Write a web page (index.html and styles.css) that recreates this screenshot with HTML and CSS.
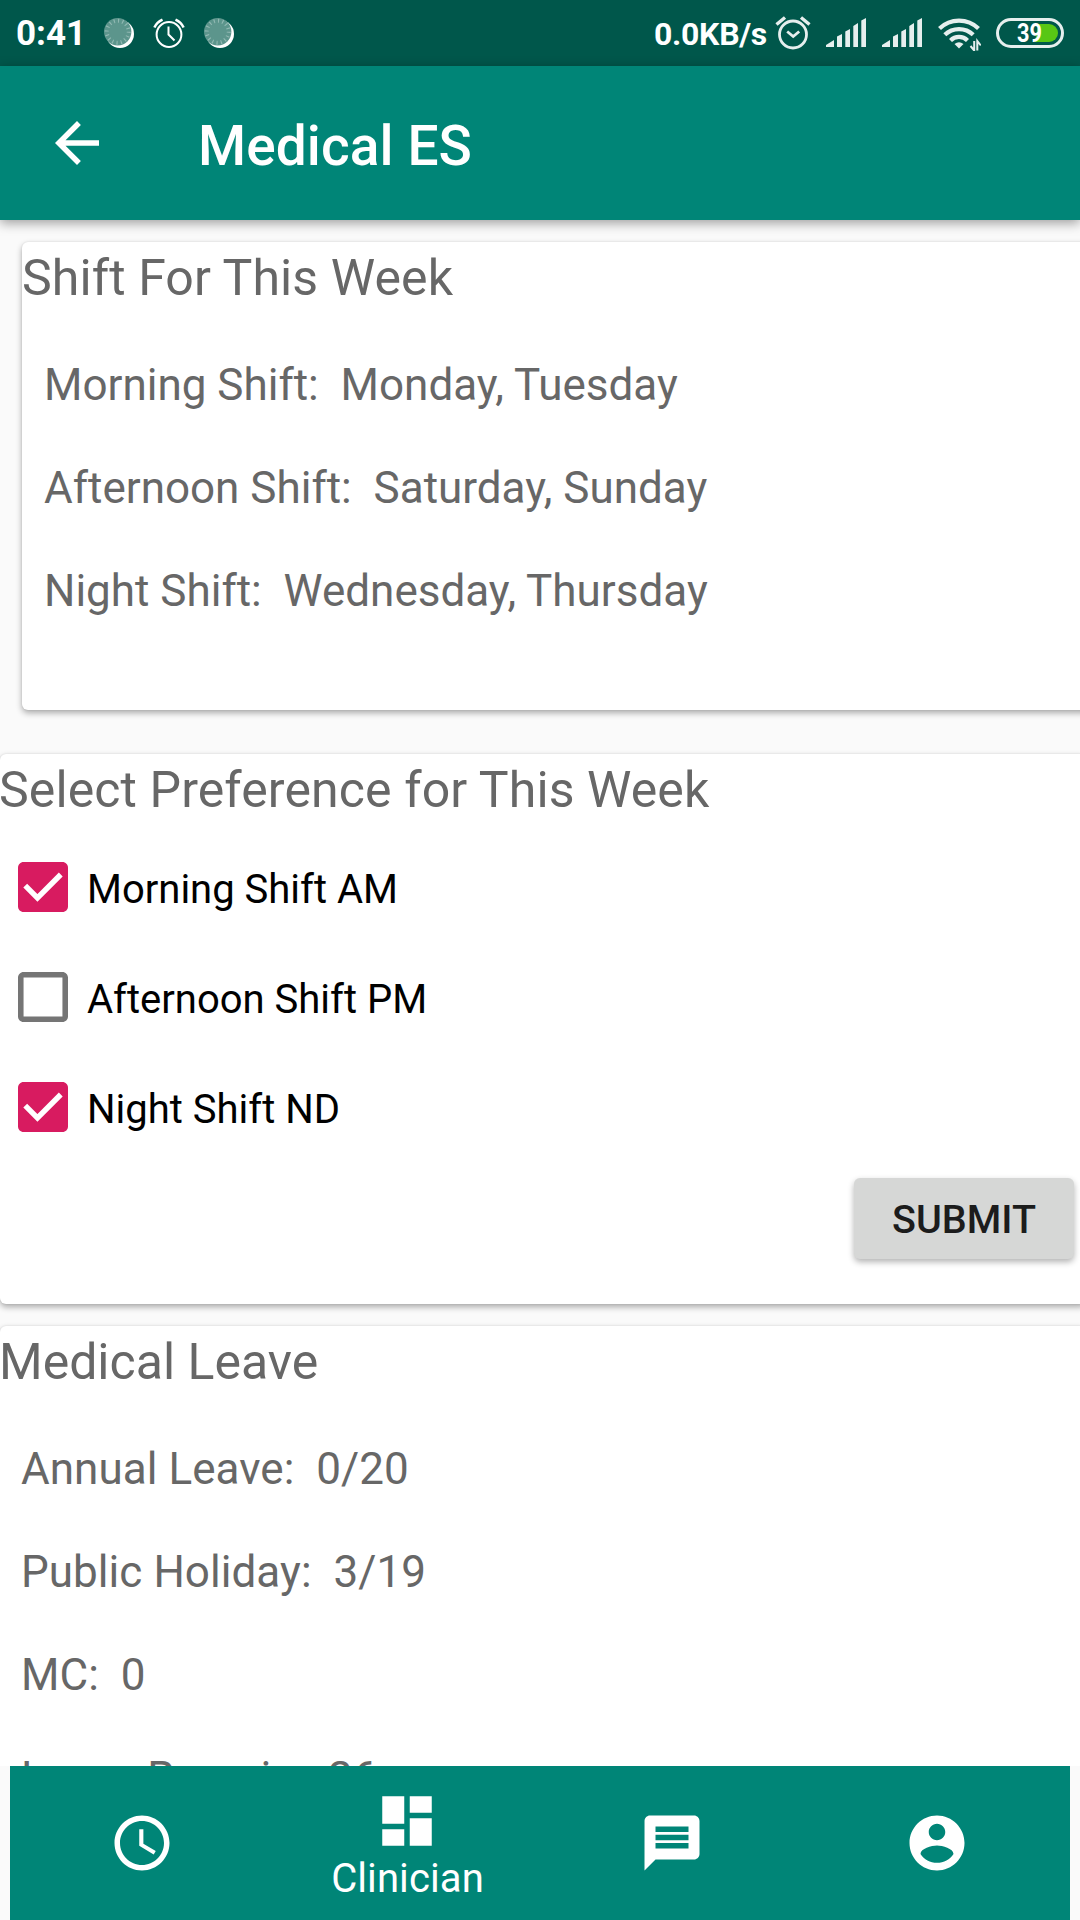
FILE: index.html
```html
<!DOCTYPE html>
<html lang="en">
<head>
<meta charset="utf-8">
<title>Medical ES</title>
<link rel="stylesheet" href="styles.css">
</head>
<body>
<div class="screen">
  <header class="status-bar">
    <span class="status-time">0:41</span>
    <svg class="status-disc" viewBox="0 0 30 30"><circle cx="16" cy="16" r="14" fill="#fff"/><circle cx="13.7" cy="13.7" r="13.7" fill="#5c958c"/><circle cx="13.7" cy="13.7" r="11" fill="none" stroke="#92b9b3" stroke-width="4" stroke-dasharray="1.1 3.22"/></svg>
    <svg class="status-alarm" viewBox="0 0 32 30" fill="none" stroke="#fff" stroke-width="2"><circle cx="16" cy="16.5" r="12.4"/><path d="M15.500 8.500v8l6 6"/><path d="M1.400 9.500Q3.700 4.300 9.500 1.600M30.600 9.500Q28.300 4.300 22.500 1.600" stroke-width="2.500"/></svg>
    <svg class="status-disc" viewBox="0 0 30 30"><circle cx="16" cy="16" r="14" fill="#fff"/><circle cx="13.7" cy="13.7" r="13.7" fill="#5c958c"/><circle cx="13.7" cy="13.7" r="11" fill="none" stroke="#92b9b3" stroke-width="4" stroke-dasharray="1.1 3.22"/></svg>
    <span class="status-speed">0.0KB/s</span>
    <svg class="status-clock" viewBox="0 0 36 36" fill="none" stroke="#e6efee"><circle cx="18" cy="19.500" r="13.500" stroke-width="2.800"/><path d="M12.200 16.500l6 5 6-5" stroke-width="2.800"/><path d="M1.500 9.500l8.500-7M34.500 9.500l-8.500-7" stroke-width="3.400"/></svg>
    <svg class="status-signal" viewBox="0 0 40 29" fill="#e6efee"><path d="M0 29v-2l8-5v7zM11 29V18.500l5-2.500v13zM19.300 29V13.500l4.700-2.500v18zM27.300 29V8l4.700-3v24zM35.300 29V2.500L40 0v29z"/></svg>
    <svg class="status-signal" viewBox="0 0 40 29" fill="#e6efee"><path d="M0 29v-2l8-5v7zM11 29V18.500l5-2.500v13zM19.300 29V13.500l4.700-2.500v18zM27.300 29V8l4.700-3v24zM35.300 29V2.500L40 0v29z"/></svg>
    <svg class="status-wifi" viewBox="0 0 43 33" fill="none" stroke="#e6efee" stroke-width="4.200"><path d="M1.500 10.500a28 28 0 0 1 39 0M6.800 16.800a20.500 20.500 0 0 1 28.400 0M12.500 22.500a12 12 0 0 1 17 0"/><path d="M21 30.500l-4.500-4.500q4.500-3.500 9 0z" fill="#e6efee" stroke="none"/><path d="M36.200 23v9.500l-3.700-4.500M39.300 32.500V23l3.500 4.500" stroke-width="2"/></svg>
    <svg class="status-battery" viewBox="0 0 68 30"><rect x="1.500" y="1.500" width="65" height="27" rx="13.500" fill="none" stroke="#e6efee" stroke-width="3"/><path d="M42 6h11a9 9 0 0 1 0 18H39z" fill="#58c714"/><text x="33.500" y="23.800" text-anchor="middle" textLength="25" lengthAdjust="spacingAndGlyphs" class="battery-text">39</text></svg>
  </header>
  <div class="app-bar">
    <svg class="back" viewBox="0 0 24 24" fill="#fff"><path d="M20 11H7.830l5.590-5.590L12 4l-8 8 8 8 1.410-1.410L7.830 13H20v-2z"/></svg>
    <h1 class="app-title">Medical ES</h1>
  </div>
  <main class="content">
    <section class="card card-shifts">
      <h2 class="card-title">Shift For This Week</h2>
      <p class="row">Morning Shift:  Monday, Tuesday</p>
      <p class="row">Afternoon Shift:  Saturday, Sunday</p>
      <p class="row">Night Shift:  Wednesday, Thursday</p>
    </section>
    <section class="card card-preference">
      <h2 class="card-title">Select Preference for This Week</h2>
      <div class="options">
        <label class="option"><svg class="box" viewBox="3 3 18 18"><path fill="#d81b60" d="M19 3H5c-1.110 0-2 .9-2 2v14c0 1.100.89 2 2 2h14c1.110 0 2-.9 2-2V5c0-1.100-.89-2-2-2z"/><path d="M5.600 11.500l4.400 4.400 8.400-8.400" fill="none" stroke="#fff" stroke-width="1.950"/></svg><span>Morning Shift AM</span></label>
        <label class="option"><svg class="box" viewBox="3 3 18 18"><path fill="#757575" d="M19 5v14H5V5h14m0-2H5c-1.100 0-2 .9-2 2v14c0 1.100.9 2 2 2h14c1.100 0 2-.9 2-2V5c0-1.100-.9-2-2-2z"/></svg><span>Afternoon Shift PM</span></label>
        <label class="option"><svg class="box" viewBox="3 3 18 18"><path fill="#d81b60" d="M19 3H5c-1.110 0-2 .9-2 2v14c0 1.100.89 2 2 2h14c1.110 0 2-.9 2-2V5c0-1.100-.89-2-2-2z"/><path d="M5.600 11.500l4.400 4.400 8.400-8.400" fill="none" stroke="#fff" stroke-width="1.950"/></svg><span>Night Shift ND</span></label>
      </div>
      <button class="submit">SUBMIT</button>
    </section>
    <section class="card card-leave">
      <h2 class="card-title">Medical Leave</h2>
      <p class="row">Annual Leave:  0/20</p>
      <p class="row">Public Holiday:  3/19</p>
      <p class="row">MC:  0</p>
      <p class="row">Leave Remain:  26</p>
    </section>
  </main>
  <nav class="bottom-nav">
    <div class="nav-bar">
      <div class="nav-item"><svg class="nav-icon" viewBox="0 0 24 24" fill="#fff"><path d="M11.990 2C6.470 2 2 6.480 2 12s4.470 10 9.990 10C17.520 22 22 17.520 22 12S17.520 2 11.990 2zM12 20c-4.420 0-8-3.580-8-8s3.580-8 8-8 8 3.580 8 8-3.580 8-8 8z"/><path d="M12.500 7H11v6l5.250 3.150.75-1.230-4.500-2.670z"/></svg></div>
      <div class="nav-item active"><svg class="nav-icon" viewBox="0 0 24 24" fill="#fff"><path d="M3 13h8V3H3v10zm0 8h8v-6H3v6zm10 0h8V11h-8v10zm0-18v6h8V3h-8z"/></svg><span class="nav-label">Clinician</span></div>
      <div class="nav-item"><svg class="nav-icon" viewBox="0 0 24 24" fill="#fff"><path d="M20 2H4c-1.100 0-1.990.9-1.990 2L2 22l4-4h14c1.100 0 2-.9 2-2V4c0-1.100-.9-2-2-2zm-2 12H6v-2h12v2zm0-3H6V9h12v2zm0-3H6V6h12v2z"/></svg></div>
      <div class="nav-item"><svg class="nav-icon" viewBox="0 0 24 24" fill="#fff"><path d="M12 2C6.480 2 2 6.480 2 12s4.480 10 10 10 10-4.480 10-10S17.520 2 12 2zm0 3c1.660 0 3 1.340 3 3s-1.340 3-3 3-3-1.340-3-3 1.340-3 3-3zm0 14.200c-2.500 0-4.710-1.280-6-3.220.03-1.990 4-3.080 6-3.080 1.990 0 5.970 1.090 6 3.080-1.290 1.940-3.500 3.220-6 3.220z"/></svg></div>
    </div>
  </nav>
</div>
</body>
</html>
```
FILE: styles.css
```css
* { box-sizing: border-box; }
body, h1, h2, p { margin: 0; }
body { font-family: Roboto, sans-serif; background: #fafafa; }
svg { display: block; flex: none; }

.screen {
  display: flex;
  flex-direction: column;
  width: 1080px;
  height: 1920px;
  overflow: hidden;
  background: #fafafa;
}

.status-bar {
  display: flex;
  align-items: flex-start;
  flex: none;
  height: 66px;
  background: #00574b;
  color: #fff;
  font-weight: 700;
  font-size: 35px;
  line-height: 40px;
}
.status-time { width: 88px; padding-left: 16px; margin-top: 14px; }
.status-disc { width: 30px; height: 30px; margin: 18px 19px 0 16px; }
.status-alarm { width: 32px; height: 30px; margin: 18px 3px 0 0; }
.status-speed { margin: 14px 8px 0 auto; font-size: 32px; letter-spacing: -.3px; }
.status-clock { width: 36px; height: 36px; margin: 15px 15px 0 0; }
.status-signal { width: 40px; height: 29px; margin: 18px 16px 0 0; }
.status-wifi { width: 43px; height: 33px; margin: 18px 15px 0 0; }
.status-battery { width: 68px; height: 30px; margin: 18px 16px 0 0; }
.battery-text { font-size: 25px; font-weight: 700; fill: #fff; }

.app-bar {
  display: flex;
  align-items: center;
  flex: none;
  height: 154px;
  padding-left: 44px;
  background: #008577;
  color: #fff;
  box-shadow: 0 3px 11px rgba(0, 0, 0, .38);
  z-index: 1;
}
.back { width: 66px; height: 66px; }
.app-title { margin: 6px 0 0 88px; font-size: 55px; font-weight: 500; line-height: 64px; letter-spacing: .1px; }

.content {
  flex: 1;
  min-height: 0;
  overflow: hidden;
  padding-top: 22px;
}
.card {
  background: #fff;
  border-radius: 6px;
  box-shadow: 0 3px 6px rgba(0, 0, 0, .32), 0 0 2px rgba(0, 0, 0, .1);
  color: #676767;
  padding-top: 7px;
}
.card-title { font-size: 50px; font-weight: 400; line-height: 58px; letter-spacing: .1px; margin-bottom: 27px; }
.row { font-size: 44px; line-height: 103px; padding-left: 22px; white-space: pre; }

.card-shifts { height: 468px; margin: 0 -22px 44px 22px; }
.card-preference { display: flex; flex-direction: column; height: 550px; margin: 0 -6px 22px 0; }
.card-preference .card-title { margin-left: -1px; }
.card-leave { height: 600px; margin-right: -6px; }
.card-leave .card-title { margin-left: -1px; letter-spacing: 0; }
.card-leave .row { padding-left: 21px; letter-spacing: .05px; }

.options { margin-top: -14px; }
.option {
  display: flex;
  align-items: center;
  gap: 19px;
  height: 110px;
  padding-left: 18px;
  color: #000;
  font-size: 40px;
  line-height: 46px;
}
.option span { margin-top: 6px; }
.box { width: 50px; height: 50px; }
.submit {
  align-self: flex-end;
  width: 220px;
  height: 81px;
  margin: 16px 12px 0 0;
  padding: 2px 0 0;
  border: 0;
  border-radius: 6px;
  background: #d6d7d6;
  box-shadow: 0 3px 6px rgba(0, 0, 0, .3);
  color: #1c1c1c;
  font: 500 39.5px/46px Roboto, sans-serif;
}

.bottom-nav { flex: none; padding: 0 10px; background: #fafafa; z-index: 1; }
.nav-bar { display: flex; height: 154px; background: #008577; }
.nav-item {
  display: flex;
  flex: 1;
  flex-direction: column;
  align-items: center;
  justify-content: center;
}
.nav-item.active { justify-content: flex-start; padding-top: 22px; }
.nav-icon { width: 66px; height: 66px; margin-left: -1px; }
.nav-label { color: #fff; font-size: 40px; line-height: 46px; letter-spacing: .1px; margin-top: 2px; }
```
